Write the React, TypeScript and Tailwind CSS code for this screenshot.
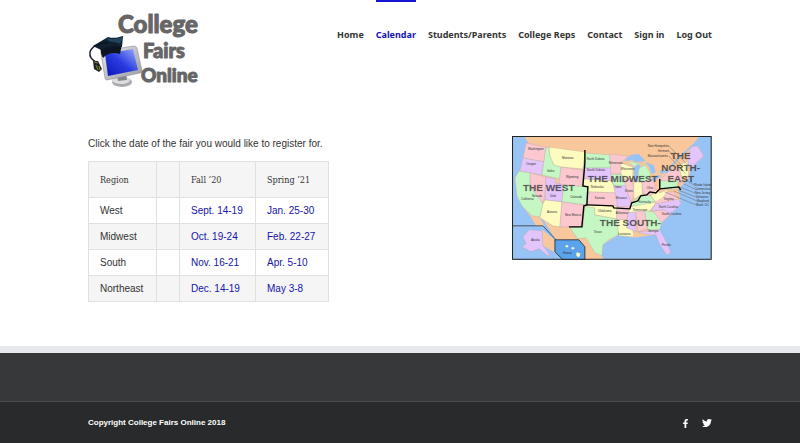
import { FaFacebookF, FaTwitter } from "react-icons/fa";

const navLinks = [
  { name: "Home", href: "#home" },
  { name: "Calendar", href: "#calendar" },
  { name: "Students/Parents", href: "#students" },
  { name: "College Reps", href: "#reps" },
  { name: "Contact", href: "#contact" },
  { name: "Sign in", href: "#signin" },
  { name: "Log Out", href: "#logout" },
];

const fairs = [
  { region: "West", fall: "Sept. 14-19", spring: "Jan. 25-30" },
  { region: "Midwest", fall: "Oct. 19-24", spring: "Feb. 22-27" },
  { region: "South", fall: "Nov. 16-21", spring: "Apr. 5-10" },
  { region: "Northeast", fall: "Dec. 14-19", spring: "May 3-8" },
];

const PINK = "#fbc8cf";
const GREEN = "#c5f7c5";
const YELLOW = "#fdfbc0";
const PURPLE = "#e3c4fb";

// [fill, outline]
const states = [
  [PINK, "14,7 34,11 32,26 11,22"],
  [PURPLE, "11,22 32,26 30,39 8,35"],
  [GREEN, "34,11 37,12 38,20 42,29 49,31 48,43 30,39"],
  [YELLOW, "37,11 73,16 71,33 49,31 42,29 38,20"],
  [PINK, "49,31 71,34 70,51 47,48"],
  [PINK, "18,37 34,41 33,60 30,68 18,50"],
  [GREEN, "7,35 18,37 18,50 31,68 28,81 20,80 10,70 5,60 3,42"],
  [PURPLE, "34,41 44,43 43,47 52,49 50,66 33,64"],
  [GREEN, "52,49 76,51 75,69 50,66"],
  [YELLOW, "33,64 50,66 48,91 41,90 28,82 31,68"],
  [PINK, "50,66 72,69 70,91 48,91"],
  [GREEN, "73,70 83,71 83,79 105,83 107,99 97,104 91,109 90,120 83,117 74,102 66,103 58,92 71,91"],
  [YELLOW, "75,69 105,70 105,83 83,79 83,72 75,71"],
  [GREEN, "73,17 98,19 99,32 72,32"],
  [PURPLE, "72,32 99,32 100,45 72,43"],
  [YELLOW, "72,43 100,45 104,57 76,56 76,51 71,50"],
  [PINK, "76,56 105,57 106,70 75,69"],
  [PINK, "98,18 117,20 110,26 109,38 99,38"],
  [GREEN, "99,38 113,39 115,50 102,50"],
  [YELLOW, "109,27 121,31 121,43 112,43 109,37"],
  [PURPLE, "102,50 114,50 119,66 118,71 106,71"],
  [PINK, "112,43 121,43 122,60 119,66 114,52"],
  [GREEN, "116,24 124,27 131,27 122,31"],
  [GREEN, "127,32 134,29 139,38 136,45 126,46"],
  [YELLOW, "122,46 130,46 131,58 122,63"],
  [PINK, "130,46 142,43 144,54 138,60 131,58"],
  [GREEN, "119,67 131,58 139,60 143,65 137,69 118,71"],
  [YELLOW, "118,71 145,66 138,75 116,77"],
  [PINK, "105,71 118,71 115,84 105,84"],
  [YELLOW, "105,84 115,84 115,92 121,94 122,101 107,100"],
  [PURPLE, "116,77 124,76 124,96 115,92"],
  [PINK, "124,76 133,75 136,93 126,96"],
  [GREEN, "133,75 142,76 150,86 148,94 136,94"],
  [PINK, "141,75 152,74 158,79 150,87"],
  [PURPLE, "144,68 167,63 169,68 158,79 152,74 139,75"],
  [PINK, "143,66 152,56 162,56 167,63 145,68"],
  [YELLOW, "144,54 148,57 157,53 151,62 144,66 139,60"],
  [PINK, "148,45 156,36 167,30 170,42 173,46 166,47"],
  [GREEN, "148,45 166,44 166,53 148,53"],
  [YELLOW, "167,30 176,25 177,40 170,41"],
  [PURPLE, "176,24 179,11 186,10 192,20 178,33"],
  [PURPLE, "126,96 148,94 155,107 159,117 155,119 148,109 144,99 135,99"],
  [PURPLE, "11,101 17,94 30,95 31,110 38,119 36,120 27,113 19,116 10,111 14,108"],
];

// [name, x, y]
const stateNames: [string, number, number][] = [
  ["Washington", 16, 14],
  ["Oregon", 14, 29],
  ["Idaho", 35, 36],
  ["Montana", 50, 23],
  ["Wyoming", 54, 42],
  ["Nevada", 20, 61],
  ["Utah", 38, 61],
  ["California", 9, 64],
  ["Colorado", 58, 62],
  ["Arizona", 35, 77],
  ["New Mexico", 53, 80],
  ["North Dakota", 75, 24],
  ["South Dakota", 75, 35],
  ["Nebraska", 79, 52],
  ["Kansas", 83, 63],
  ["Oklahoma", 86, 76],
  ["Texas", 82, 97],
  ["Minnesota", 97, 28],
  ["Wisconsin", 109, 34],
  ["Iowa", 103, 52],
  ["Missouri", 104, 63],
  ["Illinois", 113, 56],
  ["Ohio", 135, 53],
  ["Kentucky", 127, 67],
  ["Tennessee", 121, 75],
  ["Arkansas", 104, 78],
  ["Louisiana", 106, 99],
  ["Virginia", 152, 64],
  ["North Carolina", 147, 72],
  ["South Carolina", 150, 79],
  ["Georgia", 136, 96],
  ["Florida", 150, 110],
  ["New Hampshire", 136, 11],
  ["Vermont", 146, 16],
  ["Massachusetts", 136, 21],
  ["Rhode Island", 182, 50],
  ["Connecticut", 183, 54],
  ["New Jersey", 183, 58],
  ["Delaware", 184, 62],
  ["Maryland", 185, 66],
  ["Wash. DC", 184, 70],
  ["Alaska", 19, 105],
  ["Hawaii", 51, 118],
];

function Logo() {
  return (
    <svg viewBox="0 -8 114 84" className="block w-[114px] shrink-0" role="img" aria-label="College Fairs Online">
      <defs>
        <linearGradient id="screen" x1="0" y1="1" x2="1" y2="0">
          <stop offset="0" stopColor="#0a16b4" />
          <stop offset="0.5" stopColor="#2a3ce0" />
          <stop offset="1" stopColor="#9db2fa" />
        </linearGradient>
        <linearGradient id="frame" x1="0" y1="0" x2="1" y2="1">
          <stop offset="0" stopColor="#e8e8ec" />
          <stop offset="1" stopColor="#9a9aa2" />
        </linearGradient>
      </defs>
      <ellipse cx="34" cy="66" rx="10" ry="5" fill="#a9a9af" />
      <ellipse cx="33" cy="64" rx="9" ry="4" fill="#dededf" />
      <path d="M29 58 L38 56 L39 64 L30 65 Z" fill="#85858c" />
      <path d="M14 35 L46 30 Q48 30 49 32 L54 55 Q54 57 52 57 L19 64 Q17 64 17 62 L13 37 Z" fill="url(#frame)" stroke="#8d8d95" strokeWidth="0.6" />
      <path d="M17 38 L45 33 L50 54 L20 60 Z" fill="url(#screen)" />
      <path d="M13 30 C12 35 13 39 15 42 C19 37 26 36 32 38 L34 28 Z" fill="#0b1622" />
      <path d="M5 30 L20 21 C26 23 31 21 35 20 L34 31 C27 29 18 31 13 34 Z" fill="#10202e" />
      <path d="M18 22 C24 24 31 22 35 21 L32 28 C27 25 20 27 18 22 Z" fill="#1f4560" />
      <path d="M20 27 C12 26 4 30 2 36 C1 42 5 44 8 46" fill="none" stroke="#0b1622" strokeWidth="1.4" />
      <path d="M5 45 L10 45 L14 53 L11 56 L6 53 Z" fill="#1d2420" />
      <path d="M6 46 L10 47 M8 49 L10 54 M11 50 L12 54" stroke="#a9a13d" strokeWidth="0.8" />
      <g fill="#666" stroke="#666" strokeWidth="1" strokeLinejoin="round" className="font-['Lato',sans-serif] font-black">
        <text x="30" y="17" fontSize="24">College</text>
        <text x="55" y="42" fontSize="20">Fairs</text>
        <text x="53" y="66" fontSize="19">Online</text>
      </g>
    </svg>
  );
}

function RegionMap() {
  return (
    <svg viewBox="0 0 200 124" className="block w-full" role="img" aria-label="Map of the fair regions">
      <rect width="200" height="124" fill="#f9c79c" />
      {/* Oceans */}
      <path d="M0 0 H12 L17 8 L14 10 L13 16 L11 22 L8 34 L3 41 L5 60 L10 70 L18 80 L20 83 L25 92 L34 103 L43 113 L53 124 H0 Z" fill="#98c3f5" />
      <path d="M200 0 H188 L180 10 L186 10 L192 20 L179 33 L177 42 L167 53 L169 68 L150 87 L148 94 L155 107 L159 117 L155 119 L144 99 L122 102 L107 99 L91 109 L90 120 L92 124 H200 Z" fill="#98c3f5" />
      <path d="M28 81 L32 85 L40 98 L49 110 L47 112 L37 100 Z" fill="#98c3f5" />
      {/* Inset with Alaska */}
      <path d="M0 90 H31 L43 103 L53 124 H0 Z" fill="#98c3f5" />
      <path d="M30 94 L42 103 L51 122 L42 116 L31 110 Z" fill="#f9c79c" />
      {states.map(([fill, points]) => (
        <polygon key={points} points={points} fill={fill} stroke="#a5a0a0" strokeWidth="0.3" />
      ))}
      {/* Great Lakes */}
      <path d="M112 25 L119 19 L127 18 L134 25 L124 26 L120 24 Z" fill="#98c3f5" />
      <path d="M122 32 L126 28 L129 30 L126 36 L126 45 L122 46 Z" fill="#98c3f5" />
      <path d="M133 26 L142 29 L144 36 L140 38 L137 30 Z" fill="#98c3f5" />
      <path d="M138 44 L147 39 L150 40 L142 45 Z M148 35 L158 33 L157 36 L149 38 Z" fill="#98c3f5" />
      <path d="M158 32 L167 22 L178 12 L188 3" fill="none" stroke="#98c3f5" strokeWidth="1.6" />
      {/* Leader lines for the small states */}
      <path d="M157 10 L176 29 M157 15 L171 31 M157 20 L174 38 M174 44 L182 49 M172 48 L183 53 M168 51 L183 57 M166 54 L184 61 M162 55 L185 65 M153 56 L184 69" fill="none" stroke="#555" strokeWidth="0.4" />
      {/* Region borders */}
      <path d="M73 14 V27 L71 50 L76 51 L75 69 L72 70 L70 91 H57" fill="none" stroke="#000" strokeWidth="1.4" />
      <path d="M75 69 L101 70 L102 72 L118 73 L120 67 L126 65 L129 60 L135 59 L138 56 L144 57 L148 53 V43 M148 53 L167 51 L169 54" fill="none" stroke="#000" strokeWidth="1.4" />
      <path d="M0 90 H31 L43 103 L52 124" fill="none" stroke="#333" strokeWidth="0.8" />
      <path d="M43 104 H67 L73 111 V124 H51 L43 116 Z" fill="#5ba3ea" stroke="#222" strokeWidth="0.8" />
      <path d="M54 110 h2 v1 h-2 Z M60 112 h2 v1 h-2 Z M65 117 L68 118 L67 121 L65 120 Z" fill={YELLOW} stroke={YELLOW} />
      <g fontSize="3" fill="#333" className="font-['Liberation_Sans',Arial,sans-serif]">
        {stateNames.map(([name, x, y]) => (
          <text key={name} x={x} y={y}>{name}</text>
        ))}
      </g>
      <g fontSize="10" fill="#222" fillOpacity="0.7" stroke="#222" strokeOpacity="0.3" strokeWidth="0.3" className="font-['Liberation_Sans',Arial,sans-serif] font-bold">
        <text x="11" y="55">THE WEST</text>
        <text x="76" y="46">THE MIDWEST</text>
        <text x="88" y="90">THE SOUTH-</text>
        <g textAnchor="middle">
          <text x="169" y="23">THE</text>
          <text x="169" y="35">NORTH-</text>
          <text x="169" y="46">EAST</text>
        </g>
      </g>
      <rect x="0.5" y="0.5" width="199" height="123" fill="none" stroke="#222" />
    </svg>
  );
}

export default function App() {
  return (
    <div className="flex min-h-screen flex-col bg-white font-['Liberation_Sans',Arial,sans-serif] text-[#333]">
      <header className="flex items-start justify-between px-[11%]">
        <a href="#home" className="mt-2">
          <Logo />
        </a>
        <nav className="flex gap-3 font-['Noto_Sans',sans-serif] text-[9px] leading-4 font-bold">
          {navLinks.map((link) => (
            <a
              key={link.name}
              href={link.href}
              className={`border-t-2 pt-[25px] whitespace-nowrap ${link.name === "Calendar" ? "border-[#1414d2] text-[#1414b4]" : "border-transparent"}`}
            >
              {link.name}
            </a>
          ))}
        </nav>
      </header>

      <main className="flex grow items-start justify-between px-[11%] pt-11 pb-11">
        <section>
          <p className="text-[10px] leading-4">Click the date of the fair you would like to register for.</p>
          <table className="mt-[9px] border-collapse border border-[#e0e0e0] text-left text-[10px] leading-4">
            <thead className="bg-[#f5f5f5] font-['DejaVu_Serif_Condensed','DejaVu_Serif',serif] text-[9px]">
              <tr className="h-9">
                <th className="w-[68px] border border-[#e0e0e0] px-[11px] font-normal">Region</th>
                <th className="w-[23px] border border-[#e0e0e0]"></th>
                <th className="w-[76px] border border-[#e0e0e0] px-[11px] font-normal">Fall ’20</th>
                <th className="w-[73px] border border-[#e0e0e0] px-[11px] font-normal">Spring ’21</th>
              </tr>
            </thead>
            <tbody>
              {fairs.map((fair) => (
                <tr key={fair.region} className="h-[26px] even:bg-[#f5f5f5]">
                  <td className="border border-[#e0e0e0] px-[11px]">{fair.region}</td>
                  <td className="border border-[#e0e0e0]"></td>
                  <td className="border border-[#e0e0e0] px-[11px] whitespace-nowrap text-[#1414a8]">
                    <a href="#fall">{fair.fall}</a>
                  </td>
                  <td className="border border-[#e0e0e0] px-[11px] whitespace-nowrap text-[#1414a8]">
                    <a href="#spring">{fair.spring}</a>
                  </td>
                </tr>
              ))}
            </tbody>
          </table>
        </section>
        <a href="#map" className="w-[32%]">
          <RegionMap />
        </a>
      </main>

      <footer>
        <div className="box-content h-12 border-t-[7px] border-[#e7e8ed] bg-[#363839]"></div>
        <div className="flex items-center justify-between border-t border-[#4b4c4d] bg-[#282a2b] px-[11%] pt-[13px] pb-3 text-white">
          <p className="text-[8px] leading-4 font-bold">Copyright College Fairs Online 2018</p>
          <div className="flex items-center gap-3">
            <a href="#facebook" aria-label="Facebook">
              <FaFacebookF className="size-[9px]" />
            </a>
            <a href="#twitter" aria-label="Twitter">
              <FaTwitter className="size-[10px]" />
            </a>
          </div>
        </div>
      </footer>
    </div>
  );
}
